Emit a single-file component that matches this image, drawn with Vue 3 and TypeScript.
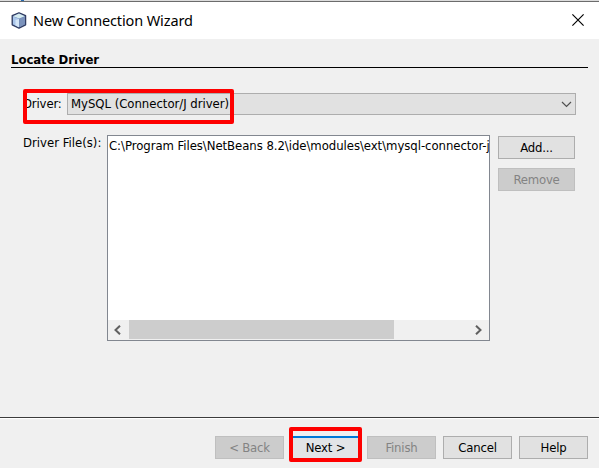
<script setup lang="ts">
import { ref } from 'vue'

interface WizardButton {
  label: string
  id: string
  disabled?: boolean
}

const driver = ref('MySQL (Connector/J driver)')
const files = ref<string[]>(['C:\\Program Files\\NetBeans 8.2\\ide\\modules\\ext\\mysql-connector-j'])
const buttons: WizardButton[] = [
  { label: '< Back', id: 'back', disabled: true },
  { label: 'Next >', id: 'next' },
  { label: 'Finish', id: 'finish', disabled: true },
  { label: 'Cancel', id: 'cancel' },
  { label: 'Help', id: 'help' },
]
</script>

<template>
  <div class="window">
    <div class="backdrop"><i></i></div>
    <header class="titlebar">
      <svg class="logo" width="16" height="17" viewBox="0 0 16 17">
        <path d="M8 .8 14.6 3.7V12.8L8 16.2 1.2 12.8V3.7Z" fill="#7189b5" stroke="#303c62" stroke-width="1.3" stroke-linejoin="round" />
        <path d="M8 1.6 13.8 4.2 8.2 6.5 2 4.2Z" fill="#d5ebf0" />
        <path d="M2 4.5 8 6.8V15.2L2 12.3Z" fill="#a9c5ea" />
        <path d="M4.5 8 8 7V15.2L4.5 13.5Z" fill="#d3e5f7" />
        <path d="M8.5 6.8 13.9 4.6V12.3L8.5 15.2Z" fill="#7b92bb" />
      </svg>
      <h1 class="title">New Connection Wizard</h1>
      <svg class="close" width="12" height="12" viewBox="0 0 12 12">
        <path d="M.4 .4 11.6 11.6M11.6 .4 .4 11.6" stroke="#000" stroke-width="1.15" />
      </svg>
    </header>
    <main class="content">
      <h2 class="heading"><span>Locate Driver</span></h2>
      <div class="driver-row">
        <label class="driver-label">Driver:</label>
        <div class="combo">
          <span class="combo-text">{{ driver }}</span>
          <svg width="11" height="7" viewBox="0 0 11 7"><path d="M1 1 5.5 5.5 10 1" fill="none" stroke="#505050" stroke-width="1.2" /></svg>
        </div>
        <div class="mark mark-driver"></div>
      </div>
      <div class="files-row">
        <label class="files-label">Driver File(s):</label>
        <div class="list">
          <div class="items">
            <div v-for="file in files" :key="file" class="item">{{ file }}</div>
          </div>
          <div class="scrollbar">
            <svg class="arrow" width="7" height="10" viewBox="0 0 7 10"><path d="M6 .7 1.5 5 6 9.3" fill="none" stroke="#606060" stroke-width="2" /></svg>
            <div class="thumb"></div>
            <svg class="arrow right" width="7" height="10" viewBox="0 0 7 10"><path d="M1 .7 5.5 5 1 9.3" fill="none" stroke="#606060" stroke-width="2" /></svg>
          </div>
        </div>
        <div class="side">
          <button class="btn add">Add...</button>
          <button class="btn remove" disabled>Remove</button>
        </div>
      </div>
    </main>
    <footer class="footer">
      <div v-for="b in buttons" :key="b.id" class="slot">
        <button class="btn" :class="b.id" :disabled="b.disabled">{{ b.label }}</button>
        <div v-if="b.id === 'next'" class="mark mark-next"></div>
      </div>
    </footer>
  </div>
</template>

<style>
body { margin: 0; overflow: hidden; }
</style>

<style scoped>
* { box-sizing: border-box; }
.window {
  width: 599px; height: 468px; display: flex; flex-direction: column;
  background: #f0f0f0; color: #000; overflow: hidden;
  font: 13px/16px "DejaVu Sans Condensed", "DejaVu Sans", sans-serif;
  font-stretch: condensed;
  white-space: pre;
}
.backdrop { height: 2px; flex: none; background: #dcdcdc; border-bottom: 1px solid #6c6c6c; padding-left: 21px; }
.backdrop i { display: block; width: 3px; height: 1px; background: #286bb0; }
.titlebar { height: 37px; flex: none; background: #fff; display: flex; align-items: flex-start; padding: 10px 15px 0 11px; }
.logo { flex: none; }
.title { margin: -2px auto 0 6px; font: 400 14.5px/20px "Noto Sans", sans-serif; letter-spacing: -0.12px; }
.close { flex: none; margin-top: 2px; }
.content { flex: none; height: 378px; padding: 11px 11px 0; }
.heading { margin: 0; height: 18px; border-bottom: 1px solid #000; font-size: 13px; line-height: 19px; font-weight: 700; }
.heading span { letter-spacing: -0.05px; }
.driver-row { position: relative; display: flex; margin: 25px 12px 0 12px; height: 22px; }
.driver-label { width: 44px; flex: none; line-height: 22px; letter-spacing: -0.15px; }
.combo { flex: 1; display: flex; align-items: center; justify-content: space-between; background: #e1e1e1; border: 1px solid #adadad; padding: 0 3px; }
.combo-text { letter-spacing: -0.03px; }
.files-row { display: flex; margin: 20px 0 0 12px; height: 206px; }
.files-label { width: 84px; flex: none; line-height: 15px; }
.list { width: 383px; flex: none; display: flex; flex-direction: column; background: #fff; border: 1px solid #828790; }
.items { flex: 1; overflow: hidden; padding: 2px 0 0 1px; }
.item { letter-spacing: -0.05px; }
.scrollbar { height: 20px; flex: none; display: flex; align-items: center; background: #f0f0f0; padding: 0 7px 0 6px; }
.arrow { flex: none; }
.thumb { width: 265px; height: 19px; background: #cdcdcd; align-self: flex-start; margin-left: 8px; }
.right { margin-left: auto; }
.side { display: flex; flex-direction: column; gap: 9px; padding: 1px 0 0 8px; }
.btn { display: block; width: 69px; height: 23px; padding: 0; margin: 0; border: 1px solid #adadad; background: #e1e1e1; color: #000; font: inherit; line-height: 21px; letter-spacing: -0.2px; text-align: center; }
.btn:disabled { color: #838383; background: #ccc; border-color: #bfbfbf; }
.side .btn { width: 77px; }
.footer { flex: 1; display: flex; justify-content: flex-end; gap: 7px; border-top: 1px solid #3c3c3c; box-shadow: inset 0 1px #fff; padding: 18px 11px 0 0; }
.slot { position: relative; }
.next { border-color: #0078d7; border-top-width: 2px; line-height: 20px; background: #e2e4e7; }
.mark { position: absolute; border: 4px solid #fe0000; border-radius: 2px; pointer-events: none; }
.mark-driver { left: 0; top: -4px; width: 211px; height: 35px; }
.mark-next { left: -2px; top: -9px; width: 73px; height: 35px; }
</style>
